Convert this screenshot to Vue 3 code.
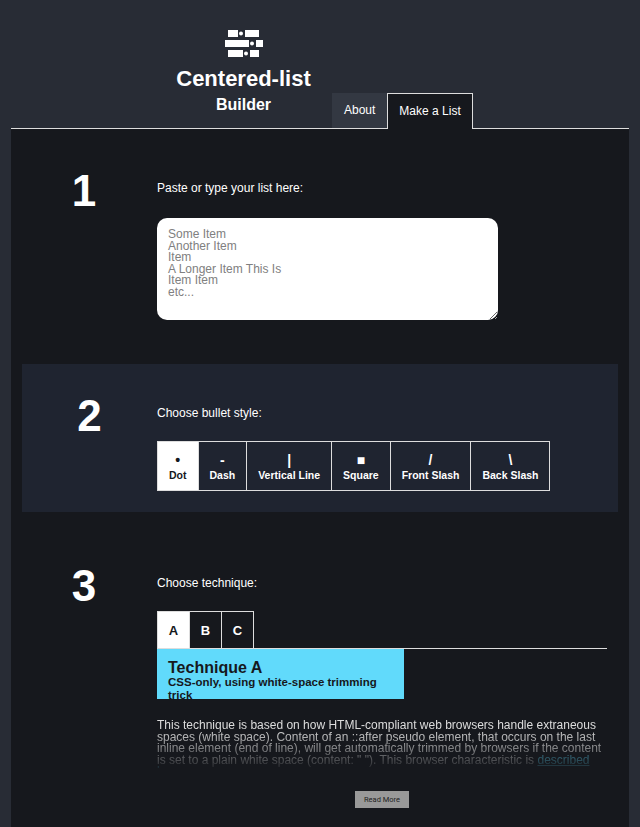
<template>
  <div class="page">
    <header class="header">
      <div class="brand">
        <svg class="logo" width="38" height="28" viewBox="0 0 38 28" fill="#fff">
          <rect x="3" y="0" width="10" height="7" />
          <circle cx="16" cy="3.5" r="2" />
          <rect x="20" y="0" width="14" height="7" />
          <rect x="0" y="10" width="24" height="7" />
          <circle cx="27" cy="13.5" r="2" />
          <rect x="31" y="10" width="7" height="7" />
          <rect x="3" y="20" width="15" height="7" />
          <circle cx="21" cy="23.5" r="2" />
          <rect x="25" y="20" width="9" height="7" />
        </svg>
        <h1>Centered-list</h1>
        <h2>Builder</h2>
      </div>
      <nav class="tabs">
        <a class="tab" href="#" @click.prevent>About</a>
        <a class="tab active" href="#" @click.prevent>Make a List</a>
      </nav>
    </header>

    <main class="main">
      <section class="step step-one">
        <div class="num">1</div>
        <div class="body">
          <p class="label">Paste or type your list here:</p>
          <textarea class="list-input" :placeholder="placeholder"></textarea>
        </div>
      </section>

      <section class="step step-two">
        <div class="num">2</div>
        <div class="body">
          <p class="label">Choose bullet style:</p>
          <div class="bullets">
            <button
              v-for="b in bullets"
              :key="b.name"
              class="bullet"
              :class="{ on: bullet === b.name }"
              @click="bullet = b.name"
            >
              <span class="glyph">{{ b.glyph }}</span>
              <span class="name">{{ b.name }}</span>
            </button>
          </div>
        </div>
      </section>

      <section class="step step-three">
        <div class="num">3</div>
        <div class="body">
          <p class="label">Choose technique:</p>
          <div class="letters">
            <button
              v-for="t in ['A', 'B', 'C']"
              :key="t"
              class="letter"
              :class="{ on: technique === t }"
              @click="technique = t"
            >{{ t }}</button>
          </div>
          <div class="banner">
            <h3>Technique A</h3>
            <p>CSS-only, using white-space trimming trick</p>
          </div>
          <p class="desc">
            This technique is based on how HTML-compliant web browsers handle extraneous spaces (white space). Content of an ::after pseudo element, that occurs on the last inline element (end of line), will get automatically trimmed by browsers if the content is set to a plain white space (content: " "). This browser characteristic is <a href="#" @click.prevent>described here</a>.
          </p>
          <div class="more-row">
            <button class="more">Read More</button>
          </div>
        </div>
      </section>
    </main>
  </div>
</template>

<script setup>
import { ref } from 'vue';

const placeholder = 'Some Item\nAnother Item\nItem\nA Longer Item This Is\nItem Item\netc...';

const bullets = [
  { name: 'Dot', glyph: '•' },
  { name: 'Dash', glyph: '-' },
  { name: 'Vertical Line', glyph: '|' },
  { name: 'Square', glyph: '■' },
  { name: 'Front Slash', glyph: '/' },
  { name: 'Back Slash', glyph: '\\' },
];

const bullet = ref('Dot');
const technique = ref('A');
</script>

<style>
body {
  background: #282c35;
}
</style>

<style scoped>
.page {
  height: 827px;
  overflow: hidden;
  background: #282c35;
  color: #fff;
  font-family: "Liberation Sans", Arial, sans-serif;
}

.header {
  display: flex;
  align-items: flex-end;
  height: 128px;
  padding-left: 155px;
  box-sizing: border-box;
}

.brand {
  width: 177px;
  height: 128px;
  padding-top: 30px;
  box-sizing: border-box;
  text-align: center;
}

.logo {
  display: block;
  margin: 0 auto 8px;
}

h1 {
  margin: 0;
  font-size: 22px;
  line-height: 26px;
  font-weight: bold;
}

h2 {
  margin: 3px 0 0;
  font-size: 16px;
  line-height: 20px;
  font-weight: bold;
}

.tabs {
  display: flex;
  height: 35px;
}

.tab {
  display: block;
  padding: 0 12px;
  line-height: 34px;
  font-size: 12px;
  color: #fff;
  text-decoration: none;
  background: #333842;
}

.tab.active {
  position: relative;
  height: 36px;
  padding: 0 11px;
  background: #16181d;
  border: 1px solid #ddd;
  border-bottom: 0;
  box-sizing: border-box;
  z-index: 1;
}

.main {
  margin: 0 11px;
  height: 699px;
  background: #16181d;
  border-top: 1px solid #ddd;
  box-sizing: border-box;
}

.step {
  display: flex;
}

.step-one {
  height: 235px;
}

.step-two {
  height: 148px;
  margin: 0 11px;
  background: #1f2430;
}

.num {
  flex: none;
  font-size: 44px;
  line-height: 50px;
  font-weight: bold;
  text-align: center;
}

.body {
  flex: 1;
  min-width: 0;
}

.step-one .num,
.step-three .num {
  width: 146px;
  padding-top: 37px;
}

.step-two .num {
  width: 135px;
  padding-top: 27px;
}

.step-one .body {
  padding-top: 52px;
}

.step-two .body {
  padding-top: 42px;
}

.step-three .body {
  padding-top: 64px;
  padding-right: 22px;
}

.step-three .num {
  padding-top: 49px;
}

.label {
  margin: 0;
  font-size: 12px;
  line-height: 14px;
}

.list-input {
  display: block;
  width: 341px;
  height: 102px;
  margin-top: 23px;
  padding: 11px;
  box-sizing: border-box;
  border: 0;
  border-radius: 10px;
  background: #fff;
  font-family: inherit;
  font-size: 12px;
  line-height: 11.5px;
  outline: none;
}

.list-input::placeholder {
  color: #808080;
}

.bullets {
  display: flex;
  margin-top: 21px;
}

.bullet {
  height: 50px;
  padding: 0 11px;
  background: transparent;
  border: 1px solid #ddd;
  margin-right: -1px;
  color: #fff;
  font-family: inherit;
  font-weight: bold;
  cursor: pointer;
}

.bullet.on {
  background: #fff;
  color: #16181d;
}

.glyph {
  display: block;
  font-size: 14px;
  line-height: 18px;
}

.name {
  display: block;
  font-size: 10.5px;
  line-height: 12px;
}

.letters {
  display: flex;
  margin-top: 21px;
  border-bottom: 1px solid #ddd;
}

.letter {
  width: 33px;
  height: 37px;
  padding: 0;
  margin-right: -1px;
  background: transparent;
  border: 1px solid #ddd;
  border-bottom: 0;
  color: #fff;
  font-family: inherit;
  font-size: 13px;
  font-weight: bold;
}

.letter.on {
  background: #fff;
  color: #16181d;
}

.banner {
  width: 247px;
  height: 50px;
  padding: 10px 11px 0;
  box-sizing: border-box;
  background: #61dafb;
  color: #16181d;
}

.banner h3 {
  margin: 0;
  font-size: 16px;
  line-height: 17px;
  font-weight: bold;
}

.banner p {
  margin: 0;
  font-size: 11.5px;
  line-height: 13px;
  font-weight: bold;
}

.desc {
  height: 48px;
  margin: 21px 0 0;
  overflow: hidden;
  font-size: 12px;
  line-height: 11.5px;
  color: #ddd;
  -webkit-mask-image: linear-gradient(to bottom, #000 0%, #000 15%, rgba(0, 0, 0, 0.1) 100%);
  mask-image: linear-gradient(to bottom, #000 0%, #000 15%, rgba(0, 0, 0, 0.1) 100%);
}

.desc a {
  color: #61dafb;
}

.more-row {
  display: flex;
  justify-content: center;
  margin-top: 23px;
}

.more {
  width: 54px;
  height: 17px;
  padding: 0;
  border: 0;
  background: #999;
  color: #222;
  font-family: Roboto, sans-serif;
  font-size: 7.5px;
}
</style>
